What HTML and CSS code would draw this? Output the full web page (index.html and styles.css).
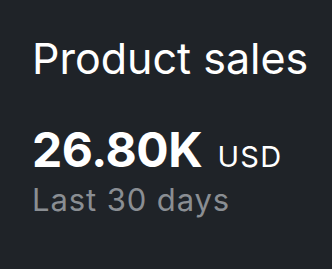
FILE: index.html
```html
<!DOCTYPE html>
<html lang="en">
<head>
    <meta charset="UTF-8">
    <meta name="viewport" content="width=device-width, initial-scale=1.0">
    <title>Product sales</title>
    <link rel="stylesheet" href="styles.css">
</head>
<body>
    <div class="card">
        <h1 class="card-title">Product sales</h1>
        <div class="metric">
            <span class="metric-value">26.80K</span>
            <span class="metric-unit">USD</span>
        </div>
        <div class="metric-period">Last 30 days</div>
    </div>
</body>
</html>
```

FILE: styles.css
```css
html, body {
    margin: 0;
    height: 100%;
}
body {
    font-family: Inter, "Noto Sans", sans-serif;
    background-color: #1f2328;
    color: #ffffff;
}
.card {
    padding: 33px 0 0 32px;
    white-space: nowrap;
}
.card-title {
    margin: 0;
    font-size: 43px;
    font-weight: 400;
    line-height: 50px;
    letter-spacing: 0;
}
.metric {
    margin-top: 43px;
    display: flex;
    align-items: baseline;
    gap: 15px;
    line-height: 48px;
}
.metric-value {
    font-size: 48px;
    font-weight: 700;
    letter-spacing: -0.4px;
}
.metric-unit {
    font-size: 29px;
    font-weight: 400;
    letter-spacing: 1.3px;
}
.metric-period {
    font-size: 31px;
    line-height: 38px;
    letter-spacing: 0.9px;
    color: #8a8e93;
}
```
